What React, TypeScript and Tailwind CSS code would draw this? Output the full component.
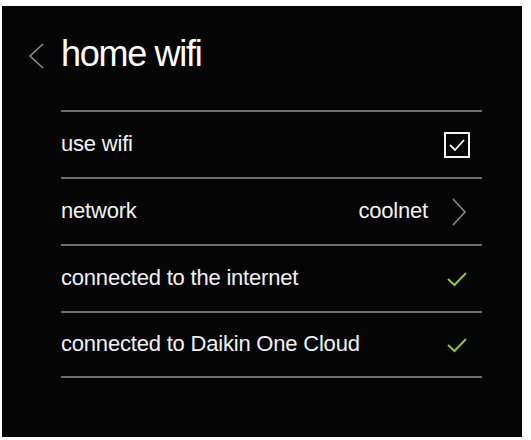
import React from "react";

const font = { fontFamily: '"Liberation Sans", Arial, sans-serif' };

function Row({ label, right, last }: { label: string; right: React.ReactNode; last?: boolean }) {
  return (
    <div
      className={`flex items-center justify-between h-[67px] border-t-2 border-[#6e6e6e] ${last ? "border-b-2" : ""}`}
    >
      <span className="text-[22px] text-[#f2f2f2] tracking-[-0.2px] mb-[3px]">{label}</span>
      {right}
    </div>
  );
}

function GreenCheck() {
  return (
    <svg width="22" height="16" viewBox="0 0 22 16" className="mr-[14px]">
      <path d="M2 8 L8.5 14 L20 2" fill="none" stroke="#8cc63f" strokeWidth="2" />
    </svg>
  );
}

export default function App() {
  return (
    <div className="w-[531px] h-[440px] bg-white pt-[6px] pl-[2px]" style={font}>
      <div className="w-[520px] h-[431px] bg-[#050505]">
        <div className="flex items-center h-[102px] pl-[26px] pb-[6px]">
          <svg width="18" height="28" viewBox="0 0 18 28" className="mr-[15px] mt-[4px]">
            <path d="M15 2 L2 14 L15 26" fill="none" stroke="#8a8a8a" strokeWidth="1.6" />
          </svg>
          <span className="text-[36px] text-white tracking-[-1.3px] leading-none">home wifi</span>
        </div>
        <div className="ml-[59px] w-[421px] mt-[2px]">
          <Row
            label="use wifi"
            right={
              <div className="w-[26px] h-[26px] border-2 border-[#f2f2f2] mr-[12px] flex items-center justify-center">
                <svg width="18" height="14" viewBox="0 0 18 14">
                  <path d="M2 7 L7 12 L16 2" fill="none" stroke="#f2f2f2" strokeWidth="1.8" />
                </svg>
              </div>
            }
          />
          <Row
            label="network"
            right={
              <div className="flex items-center">
                <span className="text-[22px] text-[#f2f2f2] tracking-[-0.2px] mr-[23px] mb-[3px]">coolnet</span>
                <svg width="16" height="28" viewBox="0 0 16 28" className="mr-[15px]">
                  <path d="M2 1 L14 14 L2 27" fill="none" stroke="#8a8a8a" strokeWidth="1.6" />
                </svg>
              </div>
            }
          />
          <Row label="connected to the internet" right={<GreenCheck />} />
          <Row label="connected to Daikin One Cloud" right={<GreenCheck />} last />
        </div>
      </div>
    </div>
  );
}
